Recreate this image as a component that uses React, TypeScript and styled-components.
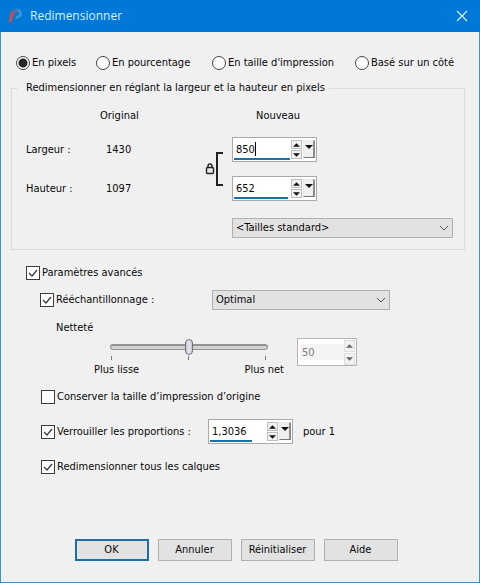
import React, { useState } from "react";
import styled, { createGlobalStyle } from "styled-components";

const GlobalStyle = createGlobalStyle`
  *, *::before, *::after { box-sizing: border-box; }
  body {
    margin: 0;
    background: #f0f0f0;
    color: #080808;
    font-family: "DejaVu Sans Condensed", "DejaVu Sans", Tahoma, sans-serif;
    font-size: 11px;
    line-height: 14px;
  }
  input, select, button { font: inherit; color: inherit; margin: 0; }
`;

const Dialog = styled.main`
  display: flex;
  flex-direction: column;
  min-height: 100vh;
  background: #f0f0f0;
  border: 1px solid #3a93c8;
  border-top: 0;
`;

const TitleBar = styled.header`
  display: flex;
  align-items: center;
  gap: 7px;
  height: 32px;
  margin: 0 -1px;
  padding: 0 12px 0 8px;
  background: #0078d7;
  color: #d3f1ff;
`;

const Title = styled.h1`
  flex: 1;
  margin: 0;
  font: 400 12px/16px "Open Sans", "Segoe UI", sans-serif;
`;

const CloseButton = styled.button`
  display: flex;
  padding: 0;
  border: 0;
  background: none;
`;

const Modes = styled.div`
  display: grid;
  grid-template-columns: 80px 116px 143px auto;
  align-items: center;
  padding: 24px 0 0 15px;
`;

const Choice = styled.label`
  display: flex;
  align-items: center;
  gap: 2px;
  white-space: nowrap;
`;

const Radio = styled.input.attrs({ type: "radio" })`
  appearance: none;
  width: 14px;
  height: 14px;
  border: 1px solid #444;
  border-radius: 50%;
  background: #fff;
  &:checked {
    background: radial-gradient(circle, #262626 0 4px, #fff 5px);
  }
`;

const CheckInput = styled.input.attrs({ type: "checkbox" })`
  appearance: none;
  width: 14px;
  height: 14px;
  border: 1px solid #3c3c3c;
  background: #fff;
`;

const CheckBox = styled.span`
  position: relative;
  display: flex;
  svg {
    position: absolute;
    inset: 0;
    pointer-events: none;
  }
`;

const Group = styled.fieldset`
  margin: 11px 14px 0 10px;
  padding: 0 11px 11px 14px;
  min-width: 0;
  border: 1px solid #dcdcdc;
`;

const Legend = styled.legend`
  margin-left: -8px;
  padding: 0 4px 0 8px;
`;

const SizeGrid = styled.div`
  display: grid;
  grid-template-columns: 74px 96px 36px 85px 1fr;
  grid-template-rows: 15px 25px 25px 23px;
  row-gap: 14px;
  align-items: center;
  padding-top: 13px;
`;

const Head = styled.span<{ $col: number; $shift: number }>`
  grid-row: 1;
  grid-column: ${(p) => p.$col};
  padding-left: ${(p) => p.$shift}px;
`;

const Cell = styled.span<{ $row: number; $col: number }>`
  grid-row: ${(p) => p.$row};
  grid-column: ${(p) => p.$col};
  padding-left: ${(p) => (p.$col === 2 ? 6 : 0)}px;
`;

const LinkMark = styled.div`
  grid-row: 2 / 4;
  grid-column: 3;
  display: flex;
  padding-left: 9px;
`;

const StandardSizes = styled.div`
  grid-row: 4;
  grid-column: 4 / 6;
  align-self: end;
`;

const SelectFrame = styled.div`
  position: relative;
  display: flex;
  svg {
    position: absolute;
    right: 4px;
    top: 6px;
    pointer-events: none;
  }
`;

const Select = styled.select`
  appearance: none;
  width: 100%;
  height: 20px;
  padding: 0 20px 0 3px;
  border: 1px solid #b0b0b0;
  border-radius: 0;
  background: #e2e2e2;
`;

const SpinFrame = styled.div`
  position: relative;
  display: flex;
  align-items: flex-start;
  width: 85px;
  height: 25px;
  padding: 2px 1px 0 1px;
  border: 1px solid #a9a9a9;
  background: #fff;
`;

const SpinInput = styled.input`
  flex: 1;
  min-width: 0;
  height: 18px;
  padding: 0 0 0 2px;
  border: 0;
  outline: 0;
  background: none;
`;

const Level = styled.span<{ $width: number }>`
  position: absolute;
  left: 1px;
  bottom: 1px;
  width: ${(p) => p.$width}%;
  height: 2px;
  background: #1a70ab;
`;

const Caret = styled.span`
  position: absolute;
  left: 22px;
  top: 4px;
  width: 1px;
  height: 14px;
  background: #000;
`;

const Steps = styled.span`
  display: flex;
  flex-direction: column;
  gap: 1px;
`;

const StepButton = styled.button<{ $tall?: boolean }>`
  display: flex;
  align-items: center;
  justify-content: center;
  width: 11px;
  height: ${(p) => (p.$tall ? 12 : 9)}px;
  padding: 0;
  border: 1px solid ${(p) => (p.$tall ? "#dedede" : "#bdbdbd")};
  background: #f2f2f2;
`;

const MoreButton = styled.button`
  width: 12px;
  height: 18px;
  margin-left: 1px;
  padding: 0 0 4px;
  display: flex;
  align-items: center;
  justify-content: center;
  border: 1px solid #e8e8e8;
  border-right: 2px solid #8c8c8c;
  border-bottom: 1px solid #777;
  background: #efefef;
`;

const Advanced = styled.section`
  display: flex;
  flex-direction: column;
  align-items: flex-start;
  padding: 16px 14px 0 25px;
`;

const Nested = styled.div`
  display: flex;
  flex-direction: column;
  width: 100%;
  padding: 10px 0 0 14px;
`;

const ResampleRow = styled.div`
  display: grid;
  grid-template-columns: 172px minmax(100px, 178px);
  align-items: center;
`;

const Sharpness = styled.div`
  display: grid;
  grid-template-columns: 190px 60px;
  column-gap: 13px;
  align-items: start;
  margin-top: 11px;
  padding-left: 54px;
`;

const SharpLabel = styled.label`
  grid-column: 1 / 3;
  margin-left: -38px;
`;

const SliderBlock = styled.div`
  display: flex;
  flex-direction: column;
  padding-top: 4px;
`;

const Range = styled.input.attrs({ type: "range" })`
  appearance: none;
  width: 158px;
  height: 16px;
  margin: 0 0 0 16px;
  background: none;
  &::-webkit-slider-runnable-track {
    height: 6px;
    border: 1px solid #929292;
    border-top-width: 2px;
    border-radius: 3px;
    background: #d2d2d2;
  }
  &::-webkit-slider-thumb {
    appearance: none;
    width: 8px;
    height: 16px;
    margin-top: -7px;
    border: 1px solid #72727e;
    border-radius: 4px;
    background: linear-gradient(90deg, #c6c6d4, #e8e8f4, #c6c6d4);
  }
`;

const Ticks = styled.div`
  display: flex;
  justify-content: space-between;
  width: 155px;
  margin: 1px 0 3px 17px;
`;

const Tick = styled.span`
  width: 1px;
  height: 4px;
  background: #777;
`;

const Ends = styled.div`
  display: flex;
  justify-content: space-between;
`;

const Disabled = styled.div`
  display: flex;
  align-items: center;
  height: 28px;
  margin-top: 3px;
  padding: 0 1px 0 2px;
  border: 1px solid #b4b4b4;
  background: #fff;
  color: #7d7d7d;
  input {
    height: 16px;
    background: #f4f4f4;
  }
`;

const OptionRow = styled.div`
  display: flex;
  align-items: center;
  min-height: 25px;
  padding-left: 1px;
`;

const Options = styled.div`
  display: flex;
  flex-direction: column;
  gap: 10px;
  margin-top: 7px;
`;

const RatioLabel = styled.div`
  flex: 0 0 167px;
`;

const Suffix = styled.span`
  margin-left: 10px;
`;

const Footer = styled.footer`
  display: flex;
  justify-content: center;
  gap: 9px;
  margin-top: auto;
  padding: 0 8px 21px 0;
`;

const ActionButton = styled.button<{ $primary?: boolean }>`
  width: 74px;
  height: 22px;
  padding: 0;
  border: ${(p) => (p.$primary ? "2px solid #1d6fa5" : "1px solid #b0b0b0")};
  background: #e2e2e2;
`;

const Arrow = ({ down = false, size = 7, color = "#111" }) => (
  <svg width={size} height="4" viewBox="0 0 8 4" aria-hidden="true">
    <path d={down ? "M0 0h8L4 4z" : "M0 4h8L4 0z"} fill={color} />
  </svg>
);

const Chevron = () => (
  <svg width="10" height="8" viewBox="0 0 10 8" aria-hidden="true">
    <path d="M1 2l4 4 4-4" fill="none" stroke="#555" strokeWidth="1" />
  </svg>
);

function Check({ label, initial = true }: { label: string; initial?: boolean }) {
  const [on, setOn] = useState(initial);
  return (
    <Choice>
      <CheckBox>
        <CheckInput checked={on} onChange={() => setOn(!on)} />
        {on && (
          <svg width="14" height="14" viewBox="0 0 14 14" aria-hidden="true">
            <path d="M3 7l3 3 5-6" fill="none" stroke="#333" strokeWidth="1.2" />
          </svg>
        )}
      </CheckBox>
      {label}
    </Choice>
  );
}

type SpinProps = { id?: string; label?: string; initial: string; level: number; caret?: boolean };

function Spin({ id, label, initial, level, caret }: SpinProps) {
  const [value, setValue] = useState(initial);
  return (
    <SpinFrame>
      <SpinInput id={id} aria-label={label} value={value} onChange={(e) => setValue(e.target.value)} />
      {caret && <Caret />}
      <Steps>
        <StepButton aria-label="Augmenter"><Arrow /></StepButton>
        <StepButton aria-label="Diminuer"><Arrow down /></StepButton>
      </Steps>
      <MoreButton aria-label="Curseur"><Arrow down size={8} /></MoreButton>
      <Level $width={level} />
    </SpinFrame>
  );
}

const modes = ["En pixels", "En pourcentage", "En taille d'impression", "Basé sur un côté"];

export default function App() {
  const [mode, setMode] = useState(0);
  const [sharp, setSharp] = useState(50);
  return (
    <>
      <GlobalStyle />
      <Dialog>
        <TitleBar>
          <svg width="15" height="16" viewBox="0 0 15 16" aria-hidden="true">
            <path d="M2 4l5-2-1 6-2 1-1 5-2-1z" fill="#a5566f" />
            <path d="M2 8l3-1-1 7-3 1z" fill="#c0524f" />
            <path d="M7 1c4-1 7 1 7 4 0 4-3 6-7 6l1-3c2 0 3-1 3-3 0-1-2-2-4-1z" fill="#2f97d4" />
            <path d="M5 3l4-2 2 2-4 2z" fill="#59718f" />
          </svg>
          <Title>Redimensionner</Title>
          <CloseButton aria-label="Fermer">
            <svg width="12" height="12" viewBox="0 0 12 12" aria-hidden="true">
              <path d="M1 1l10 10M11 1L1 11" stroke="#d3f1ff" strokeWidth="1.2" />
            </svg>
          </CloseButton>
        </TitleBar>

        <Modes role="radiogroup">
          {modes.map((text, i) => (
            <Choice key={text}>
              <Radio name="mode" checked={mode === i} onChange={() => setMode(i)} />
              {text}
            </Choice>
          ))}
        </Modes>

        <Group>
          <Legend>Redimensionner en réglant la largeur et la hauteur en pixels</Legend>
          <SizeGrid>
            <Head $col={2} $shift={0}>Original</Head>
            <Head $col={4} $shift={24}>Nouveau</Head>
            <Cell as="label" htmlFor="width" $row={2} $col={1}>Largeur :</Cell>
            <Cell $row={2} $col={2}>1430</Cell>
            <Cell as="label" htmlFor="height" $row={3} $col={1}>Hauteur :</Cell>
            <Cell $row={3} $col={2}>1097</Cell>
            <LinkMark>
              <svg width="19" height="34" viewBox="0 0 19 34" aria-hidden="true">
                <path d="M18 1h-6v32h6" fill="none" stroke="#222" strokeWidth="2" />
                <path d="M3 16v-2q0-2 2-2t2 2v2" fill="none" stroke="#222" strokeWidth="1.4" />
                <rect x="1.5" y="15.5" width="7" height="6" rx="1" fill="#e8e8e8" stroke="#222" strokeWidth="1.4" />
              </svg>
            </LinkMark>
            <Cell as="div" $row={2} $col={4}><Spin id="width" initial="850" level={68} caret /></Cell>
            <Cell as="div" $row={3} $col={4}><Spin id="height" initial="652" level={65} /></Cell>
            <StandardSizes>
              <SelectFrame>
                <Select aria-label="Tailles standard"><option>&lt;Tailles standard&gt;</option></Select>
                <Chevron />
              </SelectFrame>
            </StandardSizes>
          </SizeGrid>
        </Group>

        <Advanced>
          <Check label="Paramètres avancés" />
          <Nested>
            <ResampleRow>
              <Check label="Rééchantillonnage :" />
              <SelectFrame>
                <Select aria-label="Rééchantillonnage"><option>Optimal</option></Select>
                <Chevron />
              </SelectFrame>
            </ResampleRow>
            <Sharpness>
              <SharpLabel htmlFor="sharp">Netteté</SharpLabel>
              <SliderBlock>
                <Range id="sharp" min={0} max={100} value={sharp} onChange={(e) => setSharp(Number(e.target.value))} />
                <Ticks><Tick /><Tick /><Tick /></Ticks>
                <Ends><span>Plus lisse</span><span>Plus net</span></Ends>
              </SliderBlock>
              <Disabled>
                <SpinInput aria-label="Valeur de netteté" value={sharp} disabled readOnly />
                <Steps>
                  <StepButton $tall disabled aria-label="Augmenter"><Arrow color="#666" /></StepButton>
                  <StepButton $tall disabled aria-label="Diminuer"><Arrow down color="#666" /></StepButton>
                </Steps>
              </Disabled>
            </Sharpness>
            <Options>
              <OptionRow><Check label="Conserver la taille d’impression d’origine" initial={false} /></OptionRow>
              <OptionRow>
                <RatioLabel><Check label="Verrouiller les proportions :" /></RatioLabel>
                <Spin label="Proportions" initial="1,3036" level={51} />
                <Suffix>pour 1</Suffix>
              </OptionRow>
              <OptionRow><Check label="Redimensionner tous les calques" /></OptionRow>
            </Options>
          </Nested>
        </Advanced>

        <Footer>
          <ActionButton $primary>OK</ActionButton>
          <ActionButton>Annuler</ActionButton>
          <ActionButton>Réinitialiser</ActionButton>
          <ActionButton>Aide</ActionButton>
        </Footer>
      </Dialog>
    </>
  );
}
